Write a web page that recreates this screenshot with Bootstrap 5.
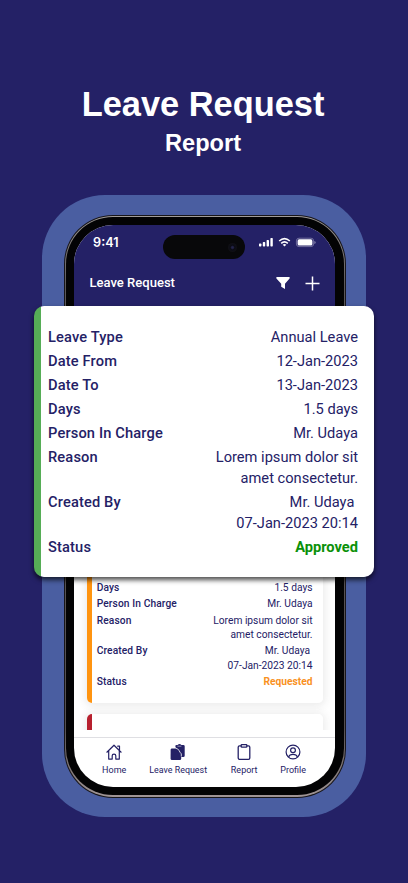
<!DOCTYPE html>
<html lang="en">
<head>
<meta charset="utf-8">
<meta name="viewport" content="width=device-width, initial-scale=1">
<title>Leave Request Report</title>
<link href="https://cdn.jsdelivr.net/npm/bootstrap@5.3.0/dist/css/bootstrap.min.css" rel="stylesheet">
<style>
:root{--navy:#242166}
body{background:var(--navy);color:var(--navy);font-family:Roboto,sans-serif;width:408px;height:883px;overflow:hidden}
.hero{height:195px;padding-top:82.500px;font-family:"Liberation Sans",Arial,sans-serif;color:#fff}
.hero h1{font-size:34.400px;line-height:42px;font-weight:700;margin:0;padding-right:2px}
.hero h2{font-size:23.600px;line-height:28px;font-weight:700;margin:4px 0 0;padding-right:2px}
.halo{width:324px;height:622px;margin-left:42px;border-radius:63px;background:#4a5ea1;padding:20px 20px 19.500px 21.500px}
.frame{height:100%;border-radius:49px;padding:1px;background:#18161a}
.rim{height:100%;border-radius:48px;padding:1.300px;background:linear-gradient(180deg,#a09c9a 0,#5c5859 12%,#554f50 88%,#a09595 100%)}
.bezel{height:100%;border-radius:47px;padding:8px 8.700px 8px 8px;background:#030304}
.screen{height:100%;border-radius:39px;background:#fff;overflow:hidden}
.topbar{background:var(--navy);height:101px;color:#fff;flex:none}
.status{height:35px;padding:0 19.500px 0 19.300px}
.clock{font:600 12.600px/18px Inter,sans-serif;width:27px}
.island{width:82px;height:24px;border-radius:12px;background:#08080a;margin:9px 0 0 42.700px}
.lens{width:9px;height:9px;border-radius:50%;background:radial-gradient(circle,#24244b 0 12%,#0b0b14 35%,#101015 70%);margin-right:8px}
.appline{padding:14px 15.300px 0 15.700px}
.apptitle{font-size:13.050px;font-weight:500;line-height:18px}
.plus{margin-left:15px}
.feed{flex:1;overflow:hidden;background:#fff}
.feed-clip{height:404px;overflow:hidden}
.entry{--edge:#ff9410;background:linear-gradient(90deg,var(--edge) 5px,#fff 5px);border-radius:5px;box-shadow:0 1px 8px 2px rgba(60,60,60,.1);flex:none}
.entry-small{margin:0 12px 0 13px;height:377px;padding:0 10.500px 13.700px 9.900px;gap:2px;font-size:10.230px;line-height:14.400px}
.entry-next{--edge:#b7202e;height:45px;margin:11px 12px 0 13px}
.field dt{font-weight:500;letter-spacing:.01em}
.field dd{margin:0;font-weight:400}
.field dd.state{font-weight:700}
.ok{color:#0b9109}
.wait{color:#f9911f}
/* enlarged record floating over the phone */
.detail{position:absolute;z-index:3;left:34px;top:306px;width:340px;height:271px;border-radius:10px;background:linear-gradient(90deg,#56ad56 7px,#fff 7px);box-shadow:0 3px 5px rgba(0,0,0,.7);padding:20.600px 16px 0 14px;gap:3px;font-size:14.650px;line-height:21px}
.tabs{height:50px;border-top:1px solid #dfdfe3;flex:none;font-size:9px;line-height:12px;padding:5px 0 0 .4px}
.tabs a{flex:none;color:var(--navy);text-decoration:none;gap:3px;white-space:nowrap}
.tabs svg{width:18px;height:18px}
.t-home{width:80px}.t-leave{width:48px}.t-report{width:84px}.t-profile{width:14px}
.t-leave{font-size:8.900px}
</style>
</head>
<body>
<header class="hero text-center">
  <h1>Leave Request</h1>
  <h2>Report</h2>
</header>
<main class="halo">
  <div class="frame"><div class="rim"><div class="bezel">
    <div class="screen d-flex flex-column">
      <div class="topbar">
        <div class="status d-flex align-items-center">
          <span class="clock">9:41</span>
          <span class="island d-flex align-items-center justify-content-end"><i class="lens"></i></span>
          <svg class="ms-auto" width="57" height="12" viewBox="0 0 57 12" fill="#fff">
            <rect x="0" y="6.5" width="2.4" height="3" rx=".7"/><rect x="3.8" y="5" width="2.4" height="4.5" rx=".7"/><rect x="7.6" y="3" width="2.4" height="6.5" rx=".7"/><rect x="11.4" y="1" width="2.4" height="8.5" rx=".7"/>
            <g fill="none" stroke="#fff" stroke-width="1.6"><path d="M20.2 4Q25.5-.9 30.800 4"/><path d="M22.200 6.300Q25.500 3.300 28.800 6.300"/></g><path d="M23.700 7.800Q25.500 6.400 27.300 7.800L25.500 9.600z"/>
            <rect x="37.400" y="1.200" width="17.200" height="8.400" rx="2.600" fill="none" stroke="#8f8db4" stroke-width=".7"/><rect x="38.600" y="2.300" width="14.800" height="6.200" rx="1.600"/><path d="M55.500 4v3q1-.4 1-1.500t-1-1.500z" fill="#a2a0c0"/>
          </svg>
        </div>
        <div class="d-flex align-items-center appline">
          <span class="apptitle">Leave Request</span>
          <svg class="ms-auto" width="14" height="14" viewBox="0 0 14 14" fill="#fff"><path d="M.4 1h13.200v1.600L9 7.800V13L5.200 10.700V7.800L.4 2.600z"/></svg>
          <svg class="plus" width="15" height="15" viewBox="0 0 15 15" stroke="#fff" stroke-width="1.500"><path d="M7.500 .5v14M.5 7.500h14"/></svg>
        </div>
      </div>
      <div class="feed">
        <div class="feed-clip d-flex flex-column">
          <div class="entry entry-small d-flex flex-column justify-content-end">
            <div class="field d-flex justify-content-between text-end"><dt>Days</dt><dd>1.5 days</dd></div>
            <div class="field d-flex justify-content-between text-end"><dt>Person In Charge</dt><dd>Mr. Udaya</dd></div>
            <div class="field d-flex justify-content-between text-end"><dt>Reason</dt><dd>Lorem ipsum dolor sit<br>amet consectetur.</dd></div>
            <div class="field d-flex justify-content-between text-end"><dt>Created By</dt><dd>Mr. Udaya&nbsp;<br>07-Jan-2023 20:14</dd></div>
            <div class="field d-flex justify-content-between text-end"><dt>Status</dt><dd class="state wait">Requested</dd></div>
          </div>
          <div class="entry entry-next"></div>
        </div>
      </div>
      <nav class="tabs d-flex">
        <a class="t-home d-flex flex-column align-items-center" href="#"><svg viewBox="0 0 18 18" fill="none" stroke="#242166" stroke-width="1.200" stroke-linejoin="round" stroke-linecap="round"><path d="M1.900 9.200 9 2.200l7.100 7M3.700 8v8.100h3.500v-3.400q0-1.500 1.800-1.500t1.800 1.500v3.400h3.500V8M12.700 3.200h1.800v3.500"/></svg>Home</a>
        <a class="t-leave d-flex flex-column align-items-center" href="#"><svg viewBox="0 0 18 18" fill="#242166"><path d="M6.300 3.300Q6.300 1.900 7.600 1.900h1Q10.500-.1 12.400 1.900h1.900q1.400 0 1.400 1.400v9.500q0 1.300-1.400 1.300h-4z"/><path d="M3 5.500h4.200l5 5.300v4.900q0 1.400-1.400 1.400H3Q1.600 17.100 1.600 15.700V6.900Q1.600 5.500 3 5.500z"/><path d="M6.900 5.200Q9 5.500 10 7.500t2.300 3.300v2.800" stroke="#fff" stroke-width=".8" fill="none"/><path d="M8.400 3.200h4" stroke="#fff" stroke-width=".5"/></svg>Leave Request</a>
        <a class="t-report d-flex flex-column align-items-center" href="#"><svg viewBox="0 0 18 18" fill="none" stroke="#242166" stroke-width="1.300"><path d="M6.200 2.900H4.500q-1.300 0-1.300 1.300v10.900q0 1.300 1.300 1.300h9q1.300 0 1.300-1.300V4.200q0-1.300-1.300-1.300h-1.700"/><path d="M6.200 2.200q0-.6.6-.6h4.400q.6 0 .6.600v1.300q0 .6-.6.600H6.800q-.6 0-.6-.6z"/></svg>Report</a>
        <a class="t-profile d-flex flex-column align-items-center" href="#"><svg viewBox="0 0 18 18" fill="none" stroke="#242166" stroke-width="1.200"><circle cx="9" cy="9" r="6.900"/><circle cx="9" cy="7.200" r="2.400"/><path d="M4.500 14.100Q5.500 11.300 9 11.300t4.500 2.800"/></svg>Profile</a>
      </nav>
    </div>
  </div></div></div>
</main>
<dl class="detail d-flex flex-column m-0">
  <div class="field d-flex justify-content-between text-end"><dt>Leave Type</dt><dd>Annual Leave</dd></div>
  <div class="field d-flex justify-content-between text-end"><dt>Date From</dt><dd>12-Jan-2023</dd></div>
  <div class="field d-flex justify-content-between text-end"><dt>Date To</dt><dd>13-Jan-2023</dd></div>
  <div class="field d-flex justify-content-between text-end"><dt>Days</dt><dd>1.5 days</dd></div>
  <div class="field d-flex justify-content-between text-end"><dt>Person In Charge</dt><dd>Mr. Udaya</dd></div>
  <div class="field d-flex justify-content-between text-end"><dt>Reason</dt><dd>Lorem ipsum dolor sit<br>amet consectetur.</dd></div>
  <div class="field d-flex justify-content-between text-end"><dt>Created By</dt><dd>Mr. Udaya&nbsp;<br>07-Jan-2023 20:14</dd></div>
  <div class="field d-flex justify-content-between text-end"><dt>Status</dt><dd class="state ok">Approved</dd></div>
</dl>
<script src="https://cdn.jsdelivr.net/npm/bootstrap@5.3.0/dist/js/bootstrap.bundle.min.js"></script>
</body>
</html>
